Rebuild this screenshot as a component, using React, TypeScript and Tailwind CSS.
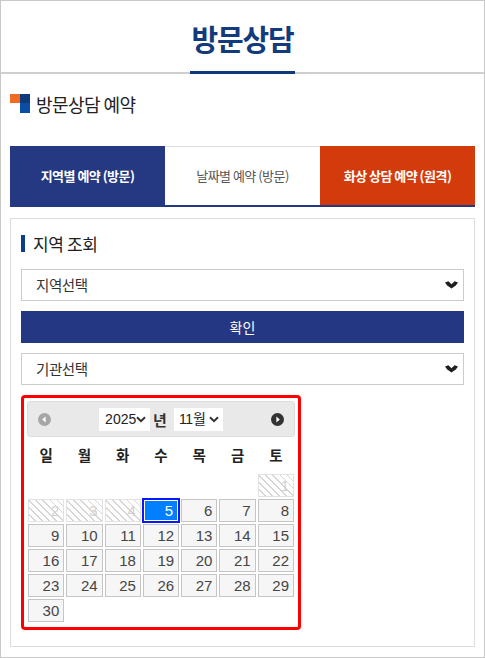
import React from "react";

const KR = "font-['Noto_Sans_CJK_KR','Noto_Sans',sans-serif]";
const AR = "font-['Liberation_Sans',Arial,sans-serif]";

// November 2025 starts on Saturday
const LEAD = 6;
const DAYS = 30;
const DISABLED = [1, 2, 3, 4];
const ACTIVE = 5;

function SelectArrow() {
  return (
    <svg width="13" height="8" viewBox="0 0 13 8" className="shrink-0">
      <path d="M0 1.6 L3.4 0.2 L6.5 3.2 L9.6 0.2 L13 1.6 L10.8 4.4 L6.5 7.6 L2.2 4.4 Z" fill="#1f1f1f" />
    </svg>
  );
}

function Chevron() {
  return (
    <svg width="10" height="7" viewBox="0 0 10 7" className="shrink-0">
      <path d="M1 1.2 L5 5.2 L9 1.2" stroke="#333" strokeWidth="2" fill="none" />
    </svg>
  );
}

function CircleArrow({ dir, color }: { dir: "left" | "right"; color: string }) {
  return (
    <svg width="13" height="13" viewBox="0 0 13 13">
      <circle cx="6.5" cy="6.5" r="6.5" fill={color} />
      {dir === "left" ? (
        <path d="M4.2 6.5 L7.6 3.6 L7.6 9.4 Z" fill="#fff" />
      ) : (
        <path d="M8.8 6.5 L5.4 3.6 L5.4 9.4 Z" fill="#fff" />
      )}
    </svg>
  );
}

function FakeSelect({ label }: { label: string }) {
  return (
    <div className="h-[32px] border border-[#cccccc] bg-white flex items-center justify-between pl-[14px] pr-[5px]">
      <span className="text-[14.5px] leading-none text-[#333] tracking-[-0.03em]">{label}</span>
      <SelectArrow />
    </div>
  );
}

function DayCell({ day }: { day: number }) {
  if (DISABLED.includes(day)) {
    return (
      <div className="h-[23px] border border-[#e2e2e2] bg-[repeating-linear-gradient(45deg,#ffffff_0px,#ffffff_4px,#d6d6d6_4px,#d6d6d6_5px)] text-right pr-[4px] text-[15px] leading-[21px] text-[#d0d0d0]">
        {day}
      </div>
    );
  }
  if (day === ACTIVE) {
    return (
      <div className="-m-[1px] h-[25px] border-2 border-[#0a18f2] bg-[#007fff] shadow-[inset_0_0_0_1px_#ffffff] text-right pr-[5px] text-[15px] leading-[21px] text-white">
        {day}
      </div>
    );
  }
  return (
    <div className="h-[23px] border border-[#c5c5c5] bg-[#f6f6f6] text-right pr-[4px] text-[15px] leading-[21px] text-[#454545]">
      {day}
    </div>
  );
}

function Calendar() {
  const cells: (number | null)[] = [];
  for (let i = 0; i < LEAD; i++) cells.push(null);
  for (let d = 1; d <= DAYS; d++) cells.push(d);

  return (
    <div className="w-[280px] border-[3px] border-[#ff0000] rounded-[4px] p-[3px] pb-[4px] bg-white">
      {/* Header */}
      <div className="h-[36px] bg-[#e9e9e9] border border-[#dddddd] rounded-[3px] flex items-center justify-between px-[10px]">
        <CircleArrow dir="left" color="#a6a6a6" />
        <div className="flex items-center">
          <div className={`w-[51px] h-[23px] bg-white flex items-center justify-between pl-[6px] pr-[4px] ${AR} text-[14px] text-[#222]`}>
            <span>2025</span>
            <Chevron />
          </div>
          <span className={`ml-[3px] mr-[7px] text-[15px] font-bold leading-none text-[#333] ${KR}`}>년</span>
          <div className="w-[49px] h-[23px] bg-white flex items-center justify-between pl-[5px] pr-[4px] text-[14px] text-[#222]">
            <span className={`${AR} tracking-[-0.02em]`}>
              11<span className={KR}>월</span>
            </span>
            <Chevron />
          </div>
        </div>
        <CircleArrow dir="right" color="#333333" />
      </div>

      {/* Weekday names */}
      <div className="grid grid-cols-7">
        {["일", "월", "화", "수", "목", "금", "토"].map((d) => (
          <div key={d} className="h-[36px] flex items-center justify-center text-[14.5px] font-bold text-[#222]">
            {d}
          </div>
        ))}
      </div>

      {/* Days */}
      <div className={`grid grid-cols-7 ${AR}`}>
        {cells.map((d, i) => (
          <div key={i} className="p-[1px]">
            {d === null ? <div className="h-[23px]" /> : <DayCell day={d} />}
          </div>
        ))}
      </div>
    </div>
  );
}

export default function App() {
  return (
    <div className={`w-[485px] h-[658px] border border-[#c8c8c8] bg-white overflow-hidden ${KR} text-[#222]`}>
      {/* Header */}
      <header className="h-[73px] border-b-2 border-[#cfcfcf] flex justify-center items-end">
        <h1 className="-mb-[2px] border-b-[3px] border-[#0f3a7a] px-[1px] pb-[18px] text-[29px] leading-none font-bold text-[#133b7b] tracking-[-0.04em]">
          방문상담
        </h1>
      </header>

      <div className="px-[9px]">
        {/* Section title */}
        <div className="mt-[20px] flex items-center gap-[6px]">
          <div className="flex w-[20px] h-[19px]">
            <div className="w-[10px] h-[9px] bg-[#f26b21]" />
            <div className="w-[10px] flex flex-col">
              <div className="h-[9px] bg-[#0d3a7a]" />
              <div className="h-[10px] bg-[#0a4ea3]" />
            </div>
          </div>
          <h2 className="text-[18px] leading-none text-[#222] tracking-[-0.03em]">방문상담 예약</h2>
        </div>

        {/* Tabs */}
        <div className="mt-[33px] flex h-[61px] border-b-2 border-[#253882]">
          <div className="flex-1 bg-[#253882] flex items-center justify-center text-[13px] font-bold text-white tracking-[-0.04em]">
            지역별 예약 (방문)
          </div>
          <div className="flex-1 bg-white border-t border-[#dddddd] flex items-center justify-center text-[13px] text-[#555] tracking-[-0.04em]">
            날짜별 예약 (방문)
          </div>
          <div className="flex-1 bg-[#d33b0d] flex items-center justify-center text-[13px] font-bold text-white tracking-[-0.04em]">
            화상 상담 예약 (원격)
          </div>
        </div>

        {/* Panel */}
        <div className="mt-[11px] border border-[#dddddd] px-[10px] pt-[16px] pb-[16px]">
          <div className="flex items-center gap-[8px]">
            <div className="w-[4px] h-[17px] bg-[#0b3f8c]" />
            <h3 className="text-[17px] leading-none text-[#222] tracking-[-0.02em]">지역 조회</h3>
          </div>

          <div className="mt-[17px] flex flex-col gap-[10px]">
            <FakeSelect label="지역선택" />
            <button className="h-[32px] bg-[#243782] text-white text-[14px] leading-none">확인</button>
            <FakeSelect label="기관선택" />
            <Calendar />
          </div>
        </div>
      </div>
    </div>
  );
}
